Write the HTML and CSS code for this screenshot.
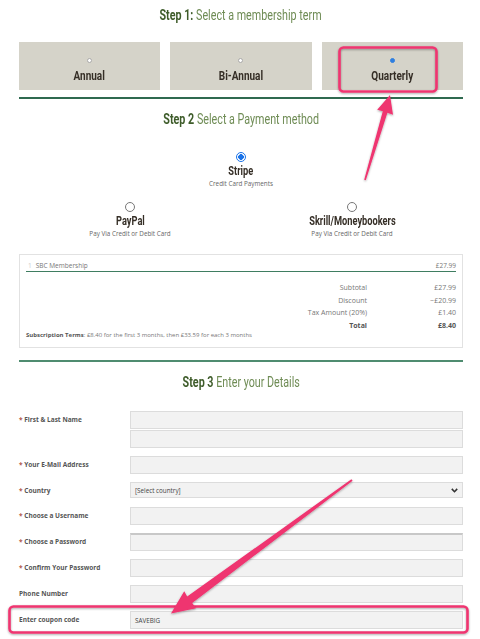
FILE: index.html
```html
<!DOCTYPE html>
<html lang="en">
<head>
<meta charset="utf-8">
<title>Membership signup</title>
<link rel="stylesheet" href="styles.css">
</head>
<body>
<div class="page">
  <h2 class="step-title t1"><span class="cond"><b>Step 1:</b> Select a membership term</span></h2>
  <div class="terms">
    <div class="term"><span class="dot"></span><span class="term-name cond">Annual</span></div>
    <div class="term"><span class="dot"></span><span class="term-name cond">Bi-Annual</span></div>
    <div class="term"><span class="dot on"></span><span class="term-name cond">Quarterly</span></div>
  </div>
  <div class="rule thin"></div>

  <h2 class="step-title t2"><span class="cond"><b>Step 2</b> Select a Payment method</span></h2>
  <div class="pay-main">
    <div class="pay">
      <span class="radio on"></span>
      <span class="pay-name cond">Stripe</span>
      <span class="pay-cap">Credit Card Payments</span>
    </div>
  </div>
  <div class="pay-row">
    <div class="pay">
      <span class="radio"></span>
      <span class="pay-name cond">PayPal</span>
      <span class="pay-cap">Pay Via Credit or Debit Card</span>
    </div>
    <div class="pay">
      <span class="radio"></span>
      <span class="pay-name cond">Skrill/Moneybookers</span>
      <span class="pay-cap">Pay Via Credit or Debit Card</span>
    </div>
  </div>

  <div class="summary">
    <div class="item"><span class="item-name"><span class="qty">1</span>SBC Membership</span><span>£27.99</span></div>
    <div class="totals">
      <span class="tl">Subtotal</span><span class="tv">£27.99</span>
      <span class="tl">Discount</span><span class="tv">−£20.99</span>
      <span class="tl">Tax Amount (20%)</span><span class="tv">£1.40</span>
      <span class="tl strong">Total</span><span class="tv strong">£8.40</span>
    </div>
    <p class="sub-terms"><b>Subscription Terms</b>: £8.40 for the first 3 months, then £33.59 for each 3 months</p>
  </div>
  <div class="rule thick"></div>

  <h2 class="step-title t3"><span class="cond"><b>Step 3</b> Enter your Details</span></h2>
  <div class="form">
    <span class="lbl"><i>*</i> First &amp; Last Name</span>
    <div class="stack"><div class="field"></div><div class="field"></div></div>
    <span class="lbl"><i>*</i> Your E-Mail Address</span>
    <div class="field"></div>
    <span class="lbl"><i>*</i> Country</span>
    <div class="field select"><span>[Select country]</span>
      <svg class="chev" width="7" height="5" viewBox="0 0 7 5"><polyline points="0.8,0.9 3.5,3.7 6.2,0.9" fill="none" stroke="#333" stroke-width="1.6"/></svg>
    </div>
    <span class="lbl"><i>*</i> Choose a Username</span>
    <div class="field"></div>
    <span class="lbl"><i>*</i> Choose a Password</span>
    <div class="field pw"></div>
    <span class="lbl"><i>*</i> Confirm Your Password</span>
    <div class="field"></div>
    <span class="lbl">Phone Number</span>
    <div class="field"></div>
    <span class="lbl">Enter coupon code</span>
    <div class="field coupon"><span>SAVEBIG</span></div>
  </div>

  <svg class="annot" width="480" height="639" viewBox="0 0 480 639">
    <defs>
      <filter id="sh" x="-10%" y="-30%" width="120%" height="160%">
        <feDropShadow dx="0" dy="1" stdDeviation="1.3" flood-color="#000" flood-opacity="0.35"/>
      </filter>
    </defs>
    <g fill="none" stroke="#ef3470" stroke-width="2.6" filter="url(#sh)">
      <rect x="339.5" y="47.5" width="97" height="44" rx="4"/>
      <rect x="9.5" y="606.5" width="458" height="26" rx="4"/>
    </g>
    <g fill="#ef3470" filter="url(#sh)">
      <polygon points="390,95 393,114.8 387.4,112.8 365.8,180.2 364.2,179.8 382.8,111.2 377.2,109.8"/>
      <polygon points="171,613.5 196,608.2 192.2,603 352.6,480.8 351.4,479.2 187.2,596.6 184.2,591.2"/>
    </g>
  </svg>
</div>
</body>
</html>
```
FILE: styles.css
```css
* { box-sizing: border-box; }
body {
  margin: 0;
  background: #fff;
  font-family: "Open Sans", "Liberation Sans", sans-serif;
  color: #666;
}
.page {
  position: relative;
  width: 480px;
  height: 639px;
  overflow: hidden;
  padding: 0 17px 0 19px;
}
.cond {
  display: inline-block;
  transform: scaleX(0.74);
  white-space: nowrap;
}
.step-title {
  margin: 0;
  text-align: center;
  font-family: Roboto, "Liberation Sans", sans-serif;
  font-weight: 400;
  font-size: 14.5px;
  line-height: 20px;
  color: #6f8c55;
}
.step-title b { color: #3e5c2a; font-weight: 700; }
.t1 { margin-top: 6px; }
.terms {
  margin-top: 16px;
  display: grid;
  grid-template-columns: repeat(3, 1fr);
  gap: 10px;
}
.term {
  height: 48px;
  background: #d5d3c9;
  display: flex;
  flex-direction: column;
  align-items: center;
  padding-top: 16px;
}
.dot {
  width: 5px; height: 5px;
  border-radius: 50%;
  background: #fff;
  border: 1px solid #aaa;
}
.dot.on { background: #2f7fe0; border-color: #2f7fe0; }
.term-name {
  margin-top: 4px;
  font-family: Roboto, "Liberation Sans", sans-serif;
  font-weight: 700;
  font-size: 13.5px;
  line-height: 16px;
  color: #352e26;
}
.rule.thin { margin-top: 7px; height: 2px; background: #2f6a50; }
.rule.thick { margin-top: 12px; height: 2px; background: #4f8c70; }
.t2 { margin-top: 11px; }
.pay-main { margin-top: 22px; display: flex; justify-content: center; }
.pay-row {
  margin-top: 12px;
  display: grid;
  grid-template-columns: 1fr 1fr;
}
.pay { display: flex; flex-direction: column; align-items: center; }
.radio {
  width: 10px; height: 10px;
  border-radius: 50%;
  border: 1px solid #777;
  background: #fff;
}
.radio.on {
  border-color: #1a73e8;
  background: radial-gradient(circle, #1a73e8 0 2.6px, #fff 3px);
}
.pay-name {
  margin-top: 2px;
  font-family: Roboto, "Liberation Sans", sans-serif;
  font-weight: 700;
  font-size: 12.5px;
  line-height: 14px;
  color: #352e26;
}
.pay-cap { font-size: 6.3px; line-height: 12px; color: #666; }
.summary {
  margin-top: 14px;
  border: 1px solid #e2e2e2;
  padding: 5px 6px 8px;
  font-size: 7px;
  color: #777;
}
.item {
  display: flex;
  justify-content: space-between;
  line-height: 11px;
  font-size: 6.5px;
  border-bottom: 1px solid #3f7d61;
}
.qty { color: #ccc; margin: 0 4px 0 2px; }
.totals {
  margin-top: 10px;
  display: grid;
  grid-template-columns: 1fr 89px;
  line-height: 12.5px;
  text-align: right;
}
.strong { font-weight: 700; color: #555; }
.sub-terms { margin: -1px 0 0; font-size: 6px; line-height: 8px; color: #777; }
.sub-terms b { color: #555; }
.t3 { margin-top: 11px; }
.form {
  margin-top: 18px;
  display: grid;
  grid-template-columns: 111px 1fr;
  row-gap: 8px;
}
.lbl {
  font-size: 6.5px;
  font-weight: 700;
  line-height: 17px;
  color: #555;
}
.lbl i { font-style: normal; color: #b0584a; }
.stack { display: flex; flex-direction: column; gap: 1px; }
.field {
  height: 18px;
  background: #f2f2f2;
  border: 1px solid #dcdcdc;
  display: flex;
  align-items: center;
  padding: 0 4px;
  font-size: 6.3px;
  color: #444;
}
.field.select { height: 16px; justify-content: space-between; padding-right: 4px; }
.field.pw { border-top: 2px solid #c8c8c8; }
.chev { display: block; }
.annot { position: absolute; top: 0; left: 0; pointer-events: none; }
```
